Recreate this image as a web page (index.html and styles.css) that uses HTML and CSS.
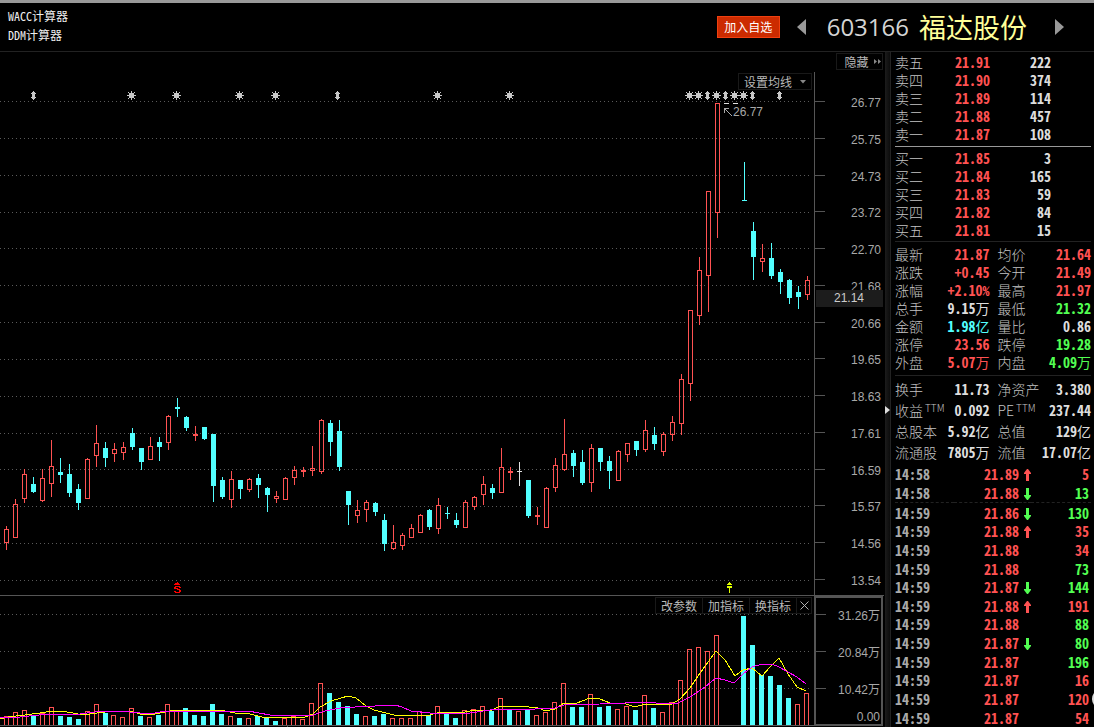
FILE: index.html
```html
<!DOCTYPE html>
<html lang="zh-CN">
<head>
<meta charset="utf-8">
<title>603166 福达股份</title>
<link rel="stylesheet" href="styles.css">
</head>
<body>
<div class="app">
  <header class="top">
    <nav class="tools">
      <a href="#wacc">WACC计算器</a>
      <a href="#ddm">DDM计算器</a>
    </nav>
    <div class="stock">
      <button class="add" type="button">加入自选</button>
      <button class="arrow" type="button" aria-label="上一只"><svg width="9" height="16" viewBox="0 0 9 16"><path d="M9 0V16L0 8Z" fill="#999"/></svg></button>
      <h1 class="title"><span class="code">603166</span><span class="name">福达股份</span></h1>
      <button class="arrow" type="button" aria-label="下一只"><svg width="9" height="16" viewBox="0 0 9 16"><path d="M0 0V16L9 8Z" fill="#999"/></svg></button>
    </div>
  </header>
  <main class="main">
    <div class="charts">
      <section class="pane price">
        <svg class="plot" id="price" viewBox="0 52 814 543" preserveAspectRatio="none" role="img" aria-label="K线图"></svg>
        <ul class="axis price-axis">
          <li>26.77</li><li>25.75</li><li>24.73</li><li>23.72</li><li>22.70</li><li>21.68</li><li>20.66</li><li>19.65</li><li>18.63</li><li>17.61</li><li>16.59</li><li>15.57</li><li>14.56</li><li>13.54</li>
        </ul>
        <span class="cursor-price">21.14</span>
        <button class="chip hide" type="button">隐藏<svg width="8" height="5" viewBox="0 0 8 5"><path d="M0 0L3 2.5L0 5ZM4 0L7 2.5L4 5Z" fill="#888"/></svg></button>
        <button class="chip ma" type="button">设置均线<svg width="6" height="4" viewBox="0 0 6 4"><path d="M0 0H6L3 3.5Z" fill="#888"/></svg></button>
      </section>
      <section class="pane volume">
        <svg class="plot" id="volume" viewBox="0 596 814 131" preserveAspectRatio="none" role="img" aria-label="成交量"></svg>
        <ul class="axis volume-axis"><li>31.26万</li><li>20.84万</li><li>10.42万</li><li class="zero">0.00</li></ul>
        <div class="chips">
          <button class="chip" type="button">改参数</button><button class="chip" type="button">加指标</button><button class="chip" type="button">换指标</button><button class="chip" type="button" aria-label="关闭"><svg width="9" height="9" viewBox="0 0 9 9"><path d="M.5 .5L8.5 8.5M8.5 .5L.5 8.5" stroke="#b0b0b0"/></svg></button>
        </div>
      </section>
    </div>
    <div class="splitter"><svg width="5" height="8" viewBox="0 0 5 8"><path d="M0 0L5 4L0 8Z" fill="#ddd"/></svg></div>
    <aside class="side">
      <table class="depth">
        <tr><th>卖五</th><td class="up">21.91</td><td>222</td></tr>
        <tr><th>卖四</th><td class="up">21.90</td><td>374</td></tr>
        <tr><th>卖三</th><td class="up">21.89</td><td>114</td></tr>
        <tr><th>卖二</th><td class="up">21.88</td><td>457</td></tr>
        <tr><th>卖一</th><td class="up">21.87</td><td>108</td></tr>
      </table>
      <hr class="rule">
      <table class="depth">
        <tr><th>买一</th><td class="up">21.85</td><td>3</td></tr>
        <tr><th>买二</th><td class="up">21.84</td><td>165</td></tr>
        <tr><th>买三</th><td class="up">21.83</td><td>59</td></tr>
        <tr><th>买四</th><td class="up">21.82</td><td>84</td></tr>
        <tr><th>买五</th><td class="up">21.81</td><td>15</td></tr>
      </table>
      <div class="block quote">
      <table class="stats">
        <tr><th>最新</th><td class="up">21.87</td><th>均价</th><td class="up">21.64</td></tr>
        <tr><th>涨跌</th><td class="up">+0.45</td><th>今开</th><td class="up">21.49</td></tr>
        <tr><th>涨幅</th><td class="up">+2.10%</td><th>最高</th><td class="up">21.97</td></tr>
        <tr><th>总手</th><td>9.15<i>万</i></td><th>最低</th><td class="down">21.32</td></tr>
        <tr><th>金额</th><td class="cyan">1.98<i>亿</i></td><th>量比</th><td>0.86</td></tr>
        <tr><th>涨停</th><td class="up">23.56</td><th>跌停</th><td class="down">19.28</td></tr>
        <tr><th>外盘</th><td class="up">5.07<i>万</i></td><th>内盘</th><td class="down">4.09<i>万</i></td></tr>
      </table>
      </div>
      <div class="block basics">
      <table class="stats">
        <tr><th>换手</th><td>11.73</td><th>净资产</th><td>3.380</td></tr>
        <tr><th>收益<sup>TTM</sup></th><td>0.092</td><th>PE<sup>TTM</sup></th><td>237.44</td></tr>
        <tr><th>总股本</th><td>5.92<i>亿</i></td><th>总值</th><td>129<i>亿</i></td></tr>
        <tr><th>流通股</th><td>7805<i>万</i></td><th>流值</th><td>17.07<i>亿</i></td></tr>
      </table>
      </div>
      <table class="ticks" id="ticks"></table>
      <span class="knob"></span>
    </aside>
  </main>
</div>
<script src="chart.js"></script>
</body>
</html>
```
FILE: styles.css
```css
* { box-sizing: border-box; }
body {
  margin: 0;
  background: #000;
  color: #ddd;
  font: 12px/16px "Liberation Sans", "Noto Sans CJK SC", sans-serif;
  overflow: hidden;
}
button { background: none; border: 0; padding: 0; margin: 0; font: inherit; color: inherit; cursor: pointer; }
table { border-collapse: collapse; width: 100%; }
th, td { padding: 0; }
svg { display: block; }

.app { display: flex; flex-direction: column; min-height: 100vh; }
.top {
  display: flex;
  justify-content: space-between;
  height: 52px;
  border-top: 3px solid #999;
  border-bottom: 1px solid #222;
}
.tools { display: flex; flex-direction: column; padding: 3px 8px; }
.tools a {
  color: #eee;
  text-decoration: none;
  font: 12px/19px "Noto Sans Mono CJK SC", "Liberation Mono", "Noto Sans CJK SC", monospace;
}
.stock { display: flex; align-items: center; padding-right: 30px; }
.add {
  width: 63px;
  height: 22px;
  background: #cc2b00;
  border: 1px solid #f04010;
  color: #fff;
  font-family: "Noto Sans CJK SC", sans-serif;
  line-height: 20px;
}
.arrow { margin-left: 17px; }
.title { display: flex; align-items: center; gap: 10px; margin: 0 11px 0 21px; font-weight: 400; line-height: 40px; }
.code { font-family: "Open Sans", sans-serif; font-size: 24px; color: #d4d4d4; }
.name { font-family: "Noto Sans CJK SC", sans-serif; font-size: 27px; color: #ffff99; }

.main { flex: 1; display: grid; grid-template-columns: 1fr 6px 203px; }
.charts { display: flex; flex-direction: column; min-width: 0; border-right: 1px solid #000; }
.pane { position: relative; display: grid; grid-template-columns: 1fr 70px; }
.price { height: 543px; }
.volume { height: 132px; border-top: 1px solid #555; }
.plot { width: 100%; height: 100%; min-width: 0; }
.axis {
  list-style: none;
  margin: 0;
  padding: 0;
  display: flex;
  flex-direction: column;
  color: #a8a8a8;
}
.axis li { display: flex; justify-content: space-between; align-items: flex-start; height: 16px; line-height: 18px; white-space: nowrap; }
.axis li::before { content: ""; width: 10px; height: 1px; margin-top: 7px; background: #555; }
.price-axis { justify-content: space-between; margin-top: 20px; padding: 22px 3px 7px 0; border-left: 1px solid #555; }
.volume-axis { gap: 21px; height: 130px; margin-right: 1px; padding: 9px 1px 0 0; border: 2px solid #555; }
.volume-axis .zero::before { visibility: hidden; }
.volume-axis .zero { margin-top: -10px; }
.cursor-price {
  position: absolute;
  right: 1px;
  top: 238px;
  width: 67px;
  padding-right: 19px;
  background: #1c1c1c;
  text-align: right;
  color: #ccc;
  line-height: 17px;
}
.chip {
  display: flex;
  align-items: center;
  justify-content: center;
  gap: 5px;
  height: 17px;
  border: 1px solid #191919;
  background: #000;
  color: #b8b8b8;
  font: 12px/14px "Noto Sans CJK SC", sans-serif;
}
.hide { position: absolute; right: 1px; top: 1px; width: 47px; padding-left: 7px; }
.ma { position: absolute; right: 72px; top: 21px; width: 74px; gap: 8px; }
.chips { position: absolute; right: 72px; top: 1px; display: flex; }
.chips .chip { width: 48px; margin-left: -1px; }
.chips .chip:last-child { width: 16px; }

.splitter { display: flex; align-items: center; background: linear-gradient(90deg, #1c1c1c, #0c0c0c); border-right: 1px solid #222; padding-top: 40px; }

.side {
  position: relative;
  display: flex;
  flex-direction: column;
  padding: 1px 3px 0 4px;
  font: 700 14px/18px "Noto Sans Mono CJK SC", Roboto, sans-serif;
  color: #ddd;
  overflow: hidden;
}
.side tr { height: 18px; }
.side th { font: 300 14px/18px "Noto Sans CJK SC", sans-serif; color: #c4c4c4; text-align: left; white-space: nowrap; }
.side td { text-align: right; white-space: nowrap; }
.side i { font-style: normal; font-weight: 400; font-family: "Noto Sans CJK SC", sans-serif; }
.side .up { color: #ff5252; }
.side .down { color: #52ff52; }
.side .cyan { color: #52ffff; }
.side .depth { table-layout: fixed; width: 156px; }
.depth td { width: 61px; }
.depth th { width: 34px; }
.rule { width: 100%; height: 1px; margin: 3px 0 2px; border: 0; background: #999; }
.stats { table-layout: fixed; }
.stats th { width: 43px; }
.stats th:nth-child(3) { width: 50px; padding-left: 8px; }
.stats td { width: 51px; }
.block { border-top: 1px solid #222; }
.quote { margin-top: 2px; padding-top: 3px; }
.basics { margin-top: 4px; padding: 2px 0 3px; }
.basics .stats tr { height: 21px; }
.basics sup { font-size: 10px; line-height: 10px; vertical-align: 4px; margin-left: 2px; }
.ticks { flex: 1; }
.side .ticks th { font: 700 14px/18px "Noto Sans Mono CJK SC", Roboto, sans-serif; color: #aaa; width: 59px; }
.ticks td:nth-child(2) { width: 65px; }
.ticks td:last-child { padding-right: 2px; }
.ticks svg { display: inline-block; vertical-align: -1px; }
.ticks .mark { width: 12px; }
.ticks .minute { border-top: 1px dashed #222; }
.knob { position: absolute; right: -18px; bottom: 18px; width: 20px; height: 20px; border-radius: 50%; background: #ddd; }
```
FILE: chart.js
```js
// Candles: colour, high, body top, body bottom, low; nine units apart.
const candles = `R526,529,543,550 R499,504,538,538 R469,474,499,503 C477,484,492,493 R469,478,501,502 R440,466,484,497
C458,472,475,483 C464,474,493,497 C484,489,503,510 R458,459,499,499 R425,443,456,467 C442,448,458,467 R443,449,454,462
R442,447,453,460 C428,433,447,450 C448,448,462,470 R437,446,460,460 C437,442,447,461 R415,416,443,450 C398,407,409,417
C416,417,428,431 R426,434,436,441 C427,427,439,440 C434,434,486,502 C477,480,497,499 R471,479,500,508 C480,480,489,499
R478,479,490,492 C474,478,485,498 C487,488,495,512 R491,496,499,503 R477,478,500,500 R466,470,478,485 R467,470,472,477
R446,468,471,476 R419,420,472,474 C420,423,442,456 C420,431,467,471 C491,491,505,525 R500,510,516,523 R500,502,510,522
C502,503,512,516 C514,520,544,551 R525,542,549,550 R533,535,546,550 R524,528,538,538 R514,515,533,533 C509,510,527,530
R498,505,529,534 C507,513,514,519 C513,520,525,528 R500,502,528,528 R496,497,507,510 R476,484,495,505 C484,488,493,499
R448,467,493,493 R467,471,473,480 W462,471,472,486 C480,480,516,518 R507,515,517,525 R487,488,528,528 R458,465,488,492
R419,454,470,471 C450,453,466,477 C450,462,483,485 R444,448,483,492 C448,448,462,471 C456,461,471,489 R450,451,481,481
R443,443,455,462 C441,441,450,456 R420,430,450,452 C427,435,444,450 R432,434,452,456 R416,422,435,441 R374,379,424,435
R310,310,384,401 R257,270,316,325 R191,191,276,312 R103,103,213,238 W103,103,104,104 W103,103,104,104 C162,200,201,201
C222,231,257,280 R244,258,262,272 C243,258,276,279 C269,272,282,294 C279,280,298,304 C286,292,297,309 R276,280,295,300`.split(/\s+/);

// Volume bars: colour and top edge.
const volumes = `R716 R712 R710 C715 R713 R707 C716 C717 C719 R711 R704 C713 R715 R717 R708 C716 R717 C715 R704 R711 C708 C715 C716 C704
C714 R716 C718 R718 C716 C718 C721 R718 R716 R719 R703 R683 C693 C702 C706 C714 R716 C716 C714 R718 R718 R718 R711 C715 R706 C713
C718 R710 R709 R706 C711 R698 C710 R711 C709 R715 R712 R702 R683 C707 C707 R694 C707 C706 R709 R706 C710 R695 C708 R712 R702 R680
R649 R647 R651 R635 - - C616 C645 C675 C676 C685 C698 R704 R693`.split(/\s+/);

const ma5 = '0,719 8,717 25,715 40,713 52,711 62,711 78,714 90,714 105,712 130,711 140,714 155,714 175,710 220,710 235,713 250,714 262,717 305,717 313,714 320,707 331,701 348,696 356,698 366,706 374,710 394,715 430,715 440,712 465,712 475,710 492,710 500,706 520,706 538,708 546,711 555,709 564,703 577,703 590,698 600,699 610,703 626,704 635,707 645,704 670,705 680,699 690,688 698,676 716,651 725,660 735,676 743,670 752,668 762,676 770,667 779,658 788,674 797,687 806,691';
const ma10 = '0,718 20,717 48,714 80,714 95,712 110,711 130,712 150,714 165,711 185,711 200,712 215,711 248,711 270,715 290,715 310,716 325,711 340,708 355,707 375,706 395,705 402,707 411,711 430,713 470,713 490,710 505,709 535,709 555,708 564,705 600,704 625,703 650,702 662,704 678,703 690,697 705,687 716,678 725,680 734,683 743,674 752,667 762,664 772,664 779,667 797,677 806,684';

const colours = { R: '#ff5252', C: '#52ffff', W: '#e0e0e0' };
const rect = (x, y, w, h, fill) => h > 0 ? `<rect x="${x}" y="${y}" width="${w}" height="${h}" fill="${fill}"/>` : '';
const hollow = (x, y, h, c, open) => rect(x, y, 1, h, c) + rect(x + 4, y, 1, h, c) + rect(x, y, 5, 1, c) + (open ? '' : rect(x, y + h - 1, 5, 1, c));
const grid = ys => ys.map(y => `<path d="M0 ${y + .5}H812" stroke="#5a5a5a" stroke-dasharray="1 3"/>`).join('');

let price = grid([101, 138, 175, 212, 248, 285, 322, 359, 396, 433, 469, 506, 543, 580]);
candles.forEach((item, i) => {
  const c = colours[item[0]];
  const [high, top, bottom, low] = item.slice(1).split(',').map(Number);
  const x = 6 + 9 * i;
  price += rect(x, high, 1, top - high, c) + rect(x, bottom, 1, low - bottom, c);
  price += item[0] === 'R' ? hollow(x - 2, top, bottom - top, c) : rect(x - 2, top, 5, bottom - top, c);
  if (item[0] === 'W') price += rect(x, high, 1, low - high, c);
});
[131, 176, 239, 275, 437, 509, 689, 698, 716, 734, 743].forEach(x => {
  price += `<path transform="translate(${x - 4} 91)" fill="#c8c8c8" d="M2 2H7V7H2ZM4 0H5V9H4ZM0 4H9V5H0ZM1 1H2V2H1ZM7 1H8V2H7ZM1 7H2V8H1ZM7 7H8V8H7Z"/>`;
});
[33, 337, 707, 725, 752, 779].forEach(x => {
  price += `<path transform="translate(${x - 2} 91)" fill="#c8c8c8" d="M2 0H3V1H4V2H5V3H4V6H5V7H4V8H3V9H2V8H1V7H0V6H1V3H0V2H1V1H2Z"/>`;
});
price += '<path d="M732 116L724 108M724.500 113V108.500H729" fill="none" stroke="#aaa"/><text class="peak" x="733" y="116" font-size="12" fill="#a8a8a8">26.77</text>';
price += '<path fill="#f00" d="M177 582H178V583H179V584H180V585H174V584H175V583H177ZM175 586H180V587H181V588H179V587H176V588H175ZM174 587H176V589H174ZM175 588H178V589H180V590H181V592H180V593H175V592H174V591H176V592H179V590H177V589H175Z"/>';
price += '<path fill="#dfff00" d="M729 582H730V583H731V584H732V585H727V584H728V583H729ZM727 586H732V588H730V593H729V588H727Z"/>';
document.getElementById('price').innerHTML = `<g shape-rendering="crispEdges">${price}</g>`;

let volume = grid([614, 651, 688]);
volumes.forEach((item, i) => {
  if (item === '-') return;
  const c = colours[item[0]];
  const top = Number(item.slice(1));
  const x = 4 + 9 * i - (i > 11 ? 1 : 0);
  volume += item[0] === 'R' ? hollow(x, top, 725 - top, c, true) : rect(x, top, 5, 725 - top, c);
});
volume += `<polyline points="${ma5}" fill="none" stroke="#ff0"/><polyline points="${ma10}" fill="none" stroke="#f0f"/>`;
volume += rect(0, 725, 814, 1, '#555') + [107, 287, 476, 656].map(x => rect(x, 726, 1, 1, '#555')).join('');
document.getElementById('volume').innerHTML = `<g shape-rendering="crispEdges">${volume}</g>`;

// Time, price, direction, volume, volume colour.
const arrows = {
  u: '<svg width="7" height="12" viewBox="0 0 7 12"><path fill="#ff5252" d="M3 0H4L7 4V5H5V12H2V5H0V4Z"/></svg>',
  d: '<svg width="7" height="12" viewBox="0 0 7 12"><path fill="#52ff52" d="M3 12H4L7 8V7H5V0H2V7H0V8Z"/></svg>',
  n: ''
};
document.getElementById('ticks').innerHTML = [
  ['14:58', '21.89', 'u', 5, 'up'], ['14:58', '21.88', 'd', 13, 'down'], ['14:59', '21.86', 'd', 130, 'down'],
  ['14:59', '21.88', 'u', 35, 'up'], ['14:59', '21.88', 'n', 34, 'up'], ['14:59', '21.88', 'n', 73, 'down'],
  ['14:59', '21.87', 'd', 144, 'down'], ['14:59', '21.88', 'u', 191, 'up'], ['14:59', '21.88', 'n', 88, 'down'],
  ['14:59', '21.87', 'd', 80, 'down'], ['14:59', '21.87', 'n', 196, 'down'], ['14:59', '21.87', 'n', 16, 'up'],
  ['14:59', '21.87', 'n', 120, 'up'], ['14:59', '21.87', 'n', 54, 'up']
].map(([time, p, dir, v, c], i) =>
  `<tr${i === 2 ? ' class="minute"' : ''}><th>${time}</th><td class="up">${p}</td><td class="mark">${arrows[dir]}</td><td class="${c}">${v}</td></tr>`
).join('');
```
